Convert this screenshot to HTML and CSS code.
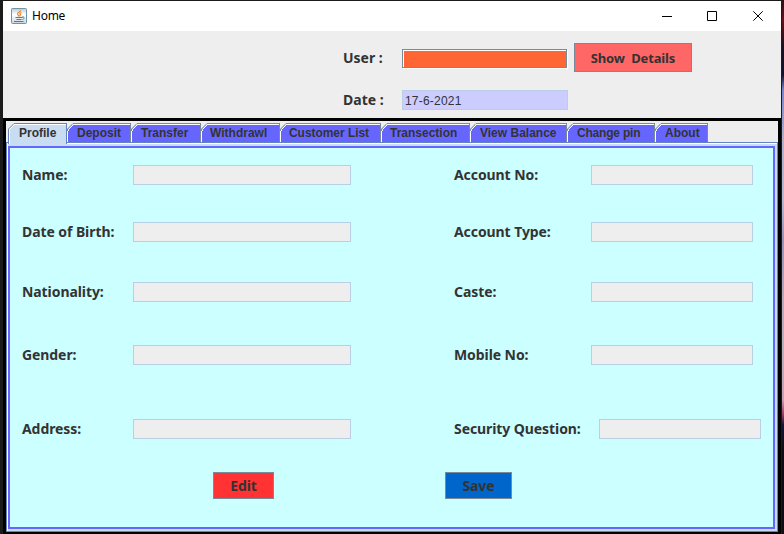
FILE: index.html
```html
<!DOCTYPE html>
<html lang="en">
<head>
<meta charset="utf-8">
<title>Home</title>
<link rel="stylesheet" href="styles.css">
</head>
<body>
<svg width="0" height="0" class="defs"><symbol id="corner" viewBox="0 0 8 8"><path d="M0 0H7L0 7Z" fill="#eee"/><path d="M0.5 8V6L6 .5H8" fill="none" stroke="#7a8a99"/><path d="M1.5 8V6.5L6.5 1.5H8" fill="none" stroke="#fff"/></symbol></svg>
<div class="window">
  <header class="titlebar">
    <svg class="java" width="16" height="16" viewBox="0 0 16 16"><defs><linearGradient id="g" x2="0" y2="1"><stop offset="0" stop-color="#b5cad8"/><stop offset=".4" stop-color="#fff"/><stop offset="1" stop-color="#c6d6e1"/></linearGradient></defs><rect x=".5" y=".5" width="15" height="15" rx="1" fill="url(#g)" stroke="#6f93a8"/><path d="M9.500 2C10 4 6 4.500 6.500 6L8 8.500M10.500 4.500C8 5.500 8.500 6 9.500 6.500L8.500 8.500" fill="none" stroke="#ee8a30" stroke-width="1.300"/><path d="M4.500 9.500H11.500M5.500 11.500H10.500M3 13.500H12.500M11 9C14 8.500 13.500 11 11.500 11.500" fill="none" stroke="#4f7f9f"/></svg>
    <span class="title">Home</span>
    <svg class="controls" width="104" height="12" viewBox="0 0 104 12" fill="none" stroke="#000"><path d="M0 6.500H10"/><path d="M45.500 1.500h9v9h-9z"/><path d="M91.300 1.300L100.700 10.700M100.700 1.300L91.300 10.700"/></svg>
  </header>
  <section class="top">
    <label class="user">User :</label><div class="userbox"></div><button class="show">Show&nbsp; Details</button>
    <label class="date">Date :</label><div class="datebox">17-6-2021</div>
  </section>
  <main class="frame">
    <div class="pane">
      <nav class="tabs">
        <div class="tab active t1"><svg><use href="#corner"/></svg><span>Profile</span></div>
        <div class="tab t2"><svg><use href="#corner"/></svg><span>Deposit</span></div>
        <div class="tab t3"><svg><use href="#corner"/></svg><span>Transfer</span></div>
        <div class="tab t4"><svg><use href="#corner"/></svg><span>Withdrawl</span></div>
        <div class="tab t5"><svg><use href="#corner"/></svg><span>Customer List</span></div>
        <div class="tab t6"><svg><use href="#corner"/></svg><span>Transection</span></div>
        <div class="tab t7"><svg><use href="#corner"/></svg><span>View Balance</span></div>
        <div class="tab t8"><svg><use href="#corner"/></svg><span>Change pin</span></div>
        <div class="tab t9"><svg><use href="#corner"/></svg><span>About</span></div>
      </nav>
      <div class="border"><div class="content">
        <div class="form">
          <label>Name:</label><i></i><label>Account No:</label><i></i>
          <label>Date of Birth:</label><i></i><label>Account Type:</label><i></i>
          <label>Nationality:</label><i></i><label>Caste:</label><i></i>
          <label>Gender:</label><i></i><label>Mobile No:</label><i></i>
          <label>Address:</label><i></i><label>Security Question:</label><i class="last"></i>
        </div>
        <div class="actions"><button class="edit">Edit</button><button class="save">Save</button></div>
      </div></div>
    </div>
  </main>
</div>
</body>
</html>
```
FILE: styles.css
```css
* { box-sizing: border-box; }
body {
  margin: 0;
  width: 784px;
  height: 534px;
  overflow: hidden;
  padding: 1px 3px 0;
  background: linear-gradient(#2a1018 0, #6a101c 20px, #201020 45px, #151030 75px, #7a85c8 90px, #b0b0c8 140px, #b5b8d0 200px, #9a90b8 240px, #b8a8b8 300px, #b8b0b8 350px, #c8a0b0 400px, #a04060 414px, #15153a 425px, #100c10 450px) right / 2px 100% no-repeat, #1b1b1b;
  color: #333;
}
.defs { position: absolute; }
.window { width: 778px; height: 533px; background: #000; display: flex; flex-direction: column; }
.titlebar { height: 30px; background: #fff; display: flex; align-items: center; padding: 0 14px 0 8px; }
.title { margin-left: 5px; font: 12px/16px "Noto Sans", sans-serif; color: #000; letter-spacing: -.25px; flex: 1; }
.controls { margin-right: 1px; }
.top {
  height: 87px; background: #eee; display: grid; padding: 12px 0 0 340px;
  grid-template-columns: 59px 166px 118px; grid-template-rows: 30px 34px; align-items: center; row-gap: 10px;
}
.top label { padding-bottom: 2px; letter-spacing: 0; }
label, button { font-family: "Noto Sans", "DejaVu Sans Condensed", sans-serif; font-weight: bold; font-size: 14px; letter-spacing: -.08px; white-space: nowrap; color: #333; }
button { border: 1px solid #7a8a99; padding: 0; border-radius: 0; }
.userbox { height: 19px; background: #f63; border: 1px solid #7a8a99; box-shadow: inset 1px 1px #fff, 1px 1px #fff; width: 165px; }
.show { height: 29px; align-self: start; margin-left: 6px; width: 118px; background: #f66; font-size: 13px; letter-spacing: -.15px; }
.datebox { height: 20px; background: #ccf; border: 1px solid #b8cfe5; font: 12px/20px "Liberation Sans", sans-serif; letter-spacing: .2px; padding-left: 2px; }
.frame { flex: 1; padding: 3px 3px 2px; }
.pane { height: 411px; background: #eee; display: flex; flex-direction: column; padding-top: 2px; }
.tabs { height: 19px; display: flex; padding-left: 2px; }
.tab { position: relative; height: 19px; background: #66f; border-top: 1px solid #7a8a99; border-right: 1px solid #7a8a99; box-shadow: inset 1px 1px #fff; font: bold 12px/18px "Liberation Sans", sans-serif; padding-left: 10px; white-space: nowrap; }
.tab svg { position: absolute; left: 0; top: -1px; width: 8px; height: 8px; }
.active { background: #c8ddf2; border-color: #6382bf; height: 21px; z-index: 2; border-left: 1px solid #6382bf; }
.active svg { left: -1px; }
.t1 { width: 59px; }
.t2 { width: 64px; }
.t3 { width: 70px; }
.t4 { width: 79px; padding-left: 9px; }
.t5 { width: 101px; padding-left: 9px; letter-spacing: -.05px; }
.t6 { width: 89px; padding-left: 9px; }
.t7 { width: 97px; }
.t8 { width: 88px; letter-spacing: -.2px; }
.t9 { width: 53px; }
.border { flex: 1; border: 1px solid #6382bf; box-shadow: inset 1px 1px #fff; background: #c8ddf2; padding: 3px 2px 2px 1px; }
.content { height: 100%; background: #cff; border: 2px solid #66f; padding: 17px 0 0 12px; }
.form { display: grid; grid-template-columns: 111px 321px 137px 170px; grid-template-rows: 57px 60px 63px 74px 20px; }
.form label { line-height: 20px; }
.form i { width: 218px; height: 20px; background: #eee; border: 1px solid #b8cfe5; }
.form i:nth-child(4n) { width: 162px; }
.form .last { margin-left: 8px; }
.actions { display: flex; gap: 171px; padding: 33px 0 0 191px; }
.actions button { height: 27px; }
.edit { width: 61px; background: #f33; }
.save { width: 67px; background: #06c; }
```
